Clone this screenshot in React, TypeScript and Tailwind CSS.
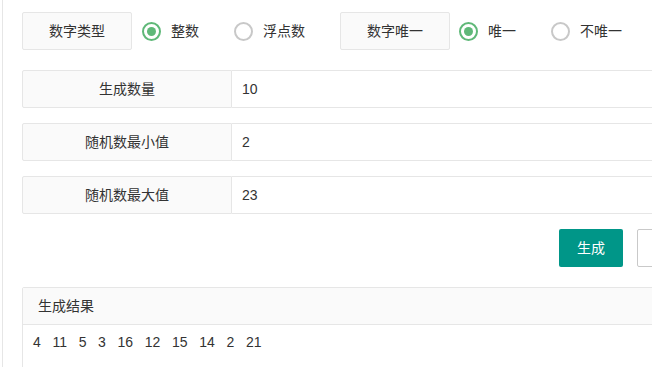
import React from 'react';

const Radio: React.FC<{ label: string; checked?: boolean }> = ({ label, checked }) => (
  <div className="flex items-center mr-[35px]">
    <span
      className={
        checked
          ? 'w-[19px] h-[19px] rounded-full border-2 border-[#5FB878] flex items-center justify-center'
          : 'w-[19px] h-[19px] rounded-full border-2 border-[#c8c8c8]'
      }
    >
      {checked && <span className="w-[9px] h-[9px] rounded-full bg-[#5FB878]" />}
    </span>
    <span className="ml-[10px]">{label}</span>
  </div>
);

const FieldRow: React.FC<{ label: string; value: string }> = ({ label, value }) => (
  <div className="flex h-[38px]">
    <div className="w-[210px] shrink-0 border border-[#e6e6e6] bg-[#fafafa] rounded-l-[2px] flex items-center justify-center">
      {label}
    </div>
    <div className="flex-1 border-y border-r border-[#e6e6e6] flex items-center pl-[10px]">{value}</div>
  </div>
);

const App: React.FC = () => {
  const results = [4, 11, 5, 3, 16, 12, 15, 14, 2, 21];

  return (
    <div className="w-[652px] h-[367px] overflow-hidden bg-white text-[14px] text-[#333] font-['Liberation_Sans','Noto_Sans_CJK_SC',sans-serif]">
      <div className="ml-[2px] h-full border-l border-[#e6e6e6] pl-[19px] pt-[12px]">
        <div className="w-[681px]">
          {/* options */}
          <div className="flex items-center h-[38px]">
            <div className="w-[110px] h-[38px] border border-[#e6e6e6] bg-[#fafafa] rounded-[2px] flex items-center justify-center mr-[10px]">
              数字类型
            </div>
            <Radio label="整数" checked />
            <Radio label="浮点数" />
            <div className="w-[110px] h-[38px] border border-[#e6e6e6] bg-[#fafafa] rounded-[2px] flex items-center justify-center mr-[9px]">
              数字唯一
            </div>
            <Radio label="唯一" checked />
            <Radio label="不唯一" />
          </div>

          <div className="mt-[20px] flex flex-col gap-[15px]">
            <FieldRow label="生成数量" value="10" />
            <FieldRow label="随机数最小值" value="2" />
            <FieldRow label="随机数最大值" value="23" />
          </div>

          <div className="mt-[15px] flex justify-end gap-[14px]">
            <button className="h-[38px] px-[18px] bg-[#009688] text-white rounded-[2px]">生成</button>
            <button className="h-[38px] px-[18px] bg-white border border-[#c9c9c9] text-[#555] rounded-[2px]">重置</button>
          </div>

          <div className="mt-[20px] border border-[#e6e6e6] rounded-[2px]">
            <div className="h-[37px] bg-[#fafafa] border-b border-[#e6e6e6] flex items-center px-[15px]">生成结果</div>
            <div className="pl-[10px] pt-[7px] h-[80px] leading-[20px] whitespace-pre">{results.join('   ')}</div>
          </div>
        </div>
      </div>
    </div>
  );
};

export default App;
